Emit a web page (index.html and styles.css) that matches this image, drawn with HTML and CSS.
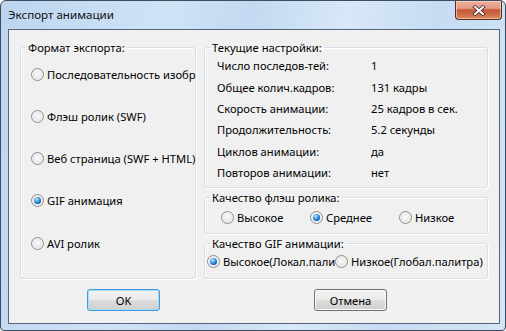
FILE: index.html
```html
<!DOCTYPE html>
<html>
<head>
    <title>Экспорт анимации</title>
    <link rel="stylesheet" href="styles.css">
</head>
<body>
    <div class="window">
        <div class="titlebar">
            <span class="title">Экспорт анимации</span>
            <span class="close">
                <svg width="14" height="11" viewBox="0 0 14 11">
                    <path d="M3 2 L11 9 M11 2 L3 9" stroke="#3b2a26" stroke-width="3.6" stroke-linecap="square" fill="none"/>
                    <path d="M3 2 L11 9 M11 2 L3 9" stroke="#ffffff" stroke-width="2" stroke-linecap="square" fill="none"/>
                </svg>
            </span>
        </div>

        <div class="client">
            <div class="columns">
                <fieldset class="group format">
                    <legend>Формат экспорта:</legend>
                    <label class="option"><span class="radio"></span>Последовательность изобр</label>
                    <label class="option"><span class="radio"></span>Флэш ролик (SWF)</label>
                    <label class="option"><span class="radio"></span>Веб страница (SWF + HTML)</label>
                    <label class="option"><span class="radio on"></span>GIF анимация</label>
                    <label class="option"><span class="radio"></span>AVI ролик</label>
                </fieldset>

                <div class="right">
                    <fieldset class="group settings">
                        <legend>Текущие настройки:</legend>
                        <div class="row"><span>Число последов-тей:</span><span>1</span></div>
                        <div class="row"><span>Общее колич.кадров:</span><span>131 кадры</span></div>
                        <div class="row"><span>Скорость анимации:</span><span>25 кадров в сек.</span></div>
                        <div class="row"><span>Продолжительность:</span><span>5.2 секунды</span></div>
                        <div class="row"><span>Циклов анимации:</span><span>да</span></div>
                        <div class="row"><span>Повторов анимации:</span><span>нет</span></div>
                    </fieldset>

                    <fieldset class="group flash">
                        <legend>Качество флэш ролика:</legend>
                        <label class="option"><span class="radio"></span>Высокое</label>
                        <label class="option"><span class="radio on"></span>Среднее</label>
                        <label class="option"><span class="radio"></span>Низкое</label>
                    </fieldset>

                    <fieldset class="group gif">
                        <legend>Качество GIF анимации:</legend>
                        <label class="option clip"><span class="radio on"></span>Высокое(Локал.палит</label>
                        <label class="option"><span class="radio"></span>Низкое(Глобал.палитра)</label>
                    </fieldset>
                </div>
            </div>

            <div class="buttons">
                <button class="btn ok">OK</button>
                <button class="btn cancel">Отмена</button>
            </div>
        </div>
    </div>
</body>
</html>
```

FILE: styles.css
```css
body {
    margin: 0;
    font-family: "Noto Sans", Arial, sans-serif;
    font-size: 11.2px;
    color: #000;
    background: #fff;
}
.window {
    box-sizing: border-box;
    width: 506px;
    height: 331px;
    border: 1px solid #3e4d5e;
    border-radius: 6px 6px 4px 4px;
    background: linear-gradient(100deg, #bcd5ef 0%, #cfe3f7 30%, #c2d9f1 45%, #d8e8f8 62%, #c6dcf3 78%, #d3e5f6 100%);
    display: flex;
    flex-direction: column;
}
.titlebar {
    height: 28px;
    display: flex;
    justify-content: space-between;
    align-items: flex-start;
}
.title {
    margin: 6px 0 0 7px;
    line-height: 16px;
    font-size: 11.6px;
    color: #111;
}
.close {
    box-sizing: border-box;
    width: 47px;
    height: 19px;
    margin-right: 3px;
    border: 1px solid #5a2a20;
    border-top: none;
    border-radius: 0 0 4px 4px;
    background: linear-gradient(#eab1a0 0%, #e39a82 40%, #c35a3c 50%, #c8603c 62%, #dc8a5c 100%);
    box-shadow: inset 0 0 0 1px rgba(255, 220, 200, 0.6);
    display: flex;
    justify-content: center;
    align-items: center;
}
.client {
    box-sizing: border-box;
    height: 295px;
    margin: 0 5px 0 7px;
    border: 1px solid #566577;
    background: #f0f0f0;
    padding: 10px 11px 0 11px;
}
.columns {
    display: grid;
    grid-template-columns: 176px 284px;
    column-gap: 8px;
}
.group {
    --pad: 0px;
    box-sizing: border-box;
    margin: 0;
    padding: 0 0 0 var(--pad);
    min-width: 0;
    border: 1px solid #d5dfe5;
    border-radius: 3px;
    box-shadow: inset 1px 1px 0 #fff, 1px 1px 0 #fff;
}
.group legend {
    margin-left: calc(5px - var(--pad));
    padding: 0 2px;
    line-height: 15px;
}
.right {
    display: flex;
    flex-direction: column;
    gap: 2px;
}
.option {
    display: flex;
    align-items: center;
    gap: 3px;
    height: 16px;
    white-space: nowrap;
}
.radio {
    box-sizing: border-box;
    flex: none;
    width: 13px;
    height: 13px;
    border-radius: 50%;
    border: 1px solid #8d8d8d;
    background: radial-gradient(circle at 50% 45%, #fbfbfb 0%, #ececec 45%, #d2d2d2 100%);
    box-shadow: inset 0 0 0 1px #f4f4f4;
    display: grid;
    place-items: center;
}
.radio.on::after {
    content: "";
    width: 7px;
    height: 7px;
    border-radius: 50%;
    background: radial-gradient(circle at 38% 32%, #c4e8ff 0%, #4aa6ea 35%, #1463b8 70%, #0b3f80 100%);
}

.format {
    --pad: 10px;
    height: 239px;
    padding-top: 11px;
    display: grid;
    grid-auto-rows: 16px;
    row-gap: 26.25px;
    align-content: start;
}

.settings {
    --pad: 12px;
    height: 148px;
}
.row {
    display: grid;
    grid-template-columns: 154px auto;
    height: 21.4px;
    align-items: center;
}

.flash {
    --pad: 16px;
    height: 44px;
    padding-top: 4px;
    display: grid;
    grid-template-columns: 89px 89px 89px;
    align-content: start;
}

.gif {
    --pad: 2px;
    height: 43px;
    padding-top: 2px;
    display: grid;
    grid-template-columns: 128px auto;
    align-content: start;
}
.clip {
    overflow: hidden;
}

.buttons {
    display: grid;
    grid-template-columns: 176px 284px;
    column-gap: 8px;
    margin-top: 10px;
}
.btn {
    box-sizing: border-box;
    width: 73px;
    height: 22px;
    padding: 0;
    font-family: inherit;
    font-size: 11.2px;
    color: #000;
    border: 1px solid #707070;
    border-radius: 3px;
    background: linear-gradient(#f2f2f2 0%, #ebebeb 48%, #dddddd 52%, #cfcfcf 100%);
    box-shadow: inset 0 0 0 1px #fbfbfb;
}
.ok {
    margin-left: 67px;
    border-color: #3c9bd8;
    box-shadow: inset 0 0 0 1px #a6e0f8;
}
.cancel {
    margin-left: 110px;
}
```
